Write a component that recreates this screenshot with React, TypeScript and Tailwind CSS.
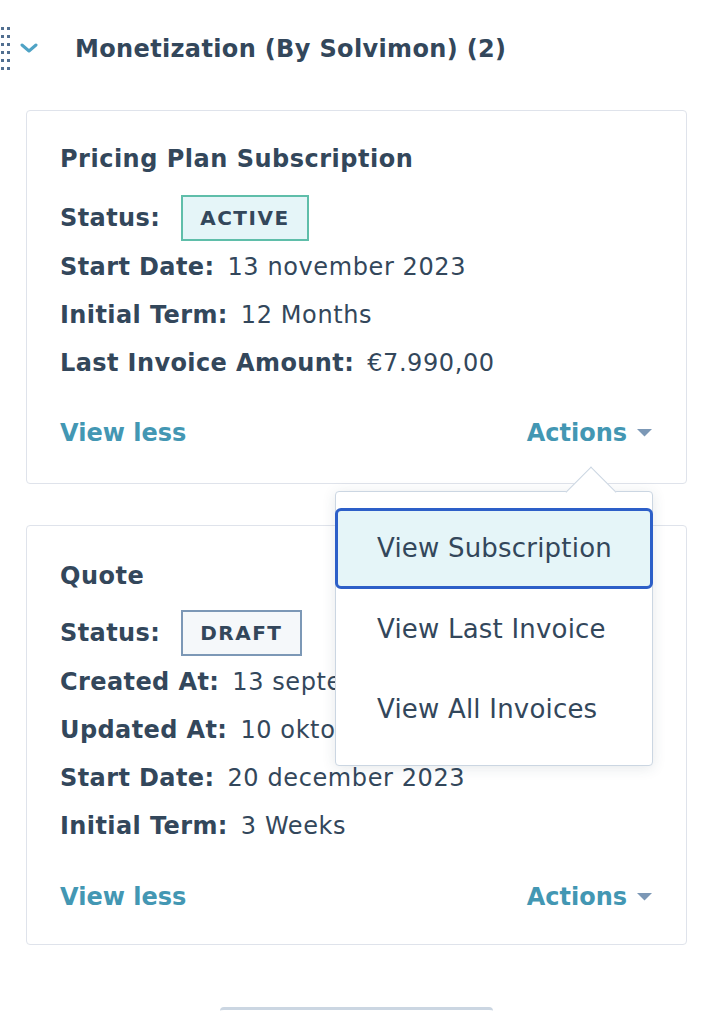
import React from "react";

const TEXT = "text-[#33475b]";

function Caret() {
  return (
    <svg width="15" height="8" viewBox="0 0 15 8" className="ml-[10px]">
      <path d="M0 0 H15 L7.5 7.5 Z" fill="#7c98b6" />
    </svg>
  );
}

function Row({ label, children }: { label: string; children: React.ReactNode }) {
  return (
    <div className="flex h-[48px] items-center pt-[2px]">
      <span className="text-[24px] font-bold tracking-[0.4px]">{label}</span>
      <span className="ml-[13px] text-[24px] tracking-[0.6px]">{children}</span>
    </div>
  );
}

function Badge({ tone, children }: { tone: "active" | "draft"; children: React.ReactNode }) {
  const cls =
    tone === "active"
      ? "border-[#5fbeaa] bg-[#e5f5f8]"
      : "border-[#7c98b6] bg-[#f5f8fa]";
  return (
    <span
      className={`ml-[21px] inline-flex h-[46px] items-center border-2 px-[17px] text-[20px] font-bold tracking-[1.5px] ${cls}`}
    >
      {children}
    </span>
  );
}

function Footer() {
  return (
    <div className="flex h-[48px] items-center justify-between pr-[34px]">
      <span className="text-[24px] font-bold text-[#4397b3]">View less</span>
      <span className="flex items-center text-[24px] font-bold text-[#4397b3]">
        Actions
        <Caret />
      </span>
    </div>
  );
}

export default function App() {
  return (
    <div
      className={`relative h-[1012px] w-[720px] overflow-hidden bg-white ${TEXT}`}
      style={{ fontFamily: '"DejaVu Sans", "Open Sans", sans-serif' }}
    >
      {/* header */}
      <div className="flex h-[96px] items-center pt-[2px]">
        <div className="grid grid-cols-2 gap-x-[3px] gap-y-[5px] self-start pt-[25px] pl-[1px]">
          {Array.from({ length: 12 }).map((_, i) => (
            <span key={i} className="block h-[3px] w-[3px] bg-[#516f90]" />
          ))}
        </div>
        <svg width="18" height="10" viewBox="0 0 18 10" className="ml-[10px] mb-[2px]">
          <path d="M2 2 L9 8 L16 2" fill="none" stroke="#4fa3c5" strokeWidth="3" strokeLinecap="round" strokeLinejoin="round" />
        </svg>
        <h2 className="ml-[37px] text-[24px] font-bold tracking-[0.35px]">Monetization (By Solvimon) (2)</h2>
      </div>

      {/* card 1 */}
      <div className="ml-[26px] mt-[14px] w-[661px] rounded-[4px] border border-[#dfe3eb] pl-[33px] pt-[32px] pb-[26px]">
        <div className="flex h-[32px] items-center text-[24px] font-bold tracking-[0.5px]">Pricing Plan Subscription</div>
        <div className="mt-[19px]">
          <div className="flex h-[48px] items-center">
            <span className="text-[24px] font-bold tracking-[0.4px]">Status:</span>
            <Badge tone="active">ACTIVE</Badge>
          </div>
          <Row label="Start Date:">13 november 2023</Row>
          <Row label="Initial Term:">12 Months</Row>
          <Row label="Last Invoice Amount:">€7.990,00</Row>
        </div>
        <div className="mt-[23px]">
          <Footer />
        </div>
      </div>

      {/* card 2 */}
      <div className="ml-[26px] mt-[41px] w-[661px] rounded-[4px] border border-[#dfe3eb] pl-[33px] pt-[34px] pb-[23px]">
        <div className="flex h-[32px] items-center text-[24px] font-bold tracking-[0.5px]">Quote</div>
        <div className="mt-[17px]">
          <div className="flex h-[48px] items-center">
            <span className="text-[24px] font-bold tracking-[0.4px]">Status:</span>
            <Badge tone="draft">DRAFT</Badge>
          </div>
          <Row label="Created At:">13 september 2023</Row>
          <Row label="Updated At:">10 oktober 2023</Row>
          <Row label="Start Date:">20 december 2023</Row>
          <Row label="Initial Term:">3 Weeks</Row>
        </div>
        <div className="mt-[24px]">
          <Footer />
        </div>
      </div>

      {/* bottom button edge */}
      <div className="ml-[220px] mt-[62px] h-[10px] w-[273px] rounded-t-[4px] border-t-[3px] border-[#cbd6e2]" />

      {/* dropdown */}
      <div className="absolute left-[335px] top-[491px] w-[318px] rounded-[4px] border border-[#cbd6e2] bg-white py-[16px] shadow-[0_2px_14px_rgba(45,62,80,0.12)]">
        <div className="absolute left-[237px] top-[-18px] h-[36px] w-[36px] rotate-45 border-l border-t border-[#cbd6e2] bg-white" />
        <div className="relative">
          <div className="mx-[-1px] flex h-[81px] items-center rounded-[6px] border-[3px] border-[#2d5fc8] bg-[#e5f5f8] pl-[39px] text-[26px] tracking-[0.2px]">
            View Subscription
          </div>
          <div className="flex h-[80px] items-center pl-[41px] text-[26px] tracking-[0.2px]">View Last Invoice</div>
          <div className="flex h-[80px] items-center pl-[41px] text-[26px] tracking-[0.2px]">View All Invoices</div>
        </div>
      </div>
    </div>
  );
}
